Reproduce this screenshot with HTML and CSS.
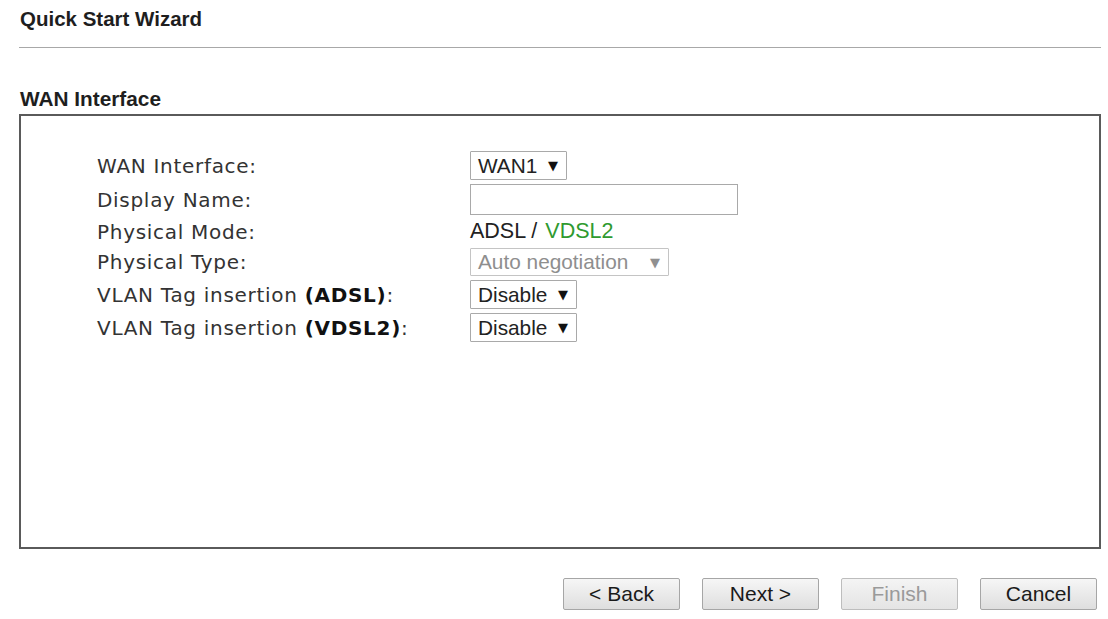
FILE: index.html
```html
<!DOCTYPE html>
<html>
<head>
<meta charset="utf-8">
<title>Quick Start Wizard</title>
<link rel="stylesheet" href="styles.css">
</head>
<body>
<div class="page">
  <h1 class="title">Quick Start Wizard</h1>
  <hr class="rule">
  <h2 class="section">WAN Interface</h2>
  <div class="panel">
    <div class="form">
      <div class="label">WAN Interface:</div>
      <div class="cell"><span class="sel sel-wan"><span class="val">WAN1</span><span class="arr">▼</span></span></div>

      <div class="label">Display Name:</div>
      <div class="cell"><input class="txt" type="text"></div>

      <div class="label">Physical Mode:</div>
      <div class="cell mode">ADSL /<span class="green">VDSL2</span></div>

      <div class="label">Physical Type:</div>
      <div class="cell"><span class="sel sel-type disabled"><span class="val">Auto negotiation</span><span class="arr">▼</span></span></div>

      <div class="label">VLAN Tag insertion <b>(ADSL)</b>:</div>
      <div class="cell"><span class="sel sel-dis"><span class="val">Disable</span><span class="arr">▼</span></span></div>

      <div class="label">VLAN Tag insertion <b>(VDSL2)</b>:</div>
      <div class="cell"><span class="sel sel-dis"><span class="val">Disable</span><span class="arr">▼</span></span></div>
    </div>
  </div>
  <div class="buttons">
    <button class="btn">&lt; Back</button>
    <button class="btn">Next &gt;</button>
    <button class="btn" disabled>Finish</button>
    <button class="btn">Cancel</button>
  </div>
</div>
</body>
</html>
```
FILE: styles.css
```css
html, body {
  margin: 0;
  padding: 0;
  background: #ffffff;
}
.page {
  width: 1108px;
  height: 619px;
  box-sizing: border-box;
  padding: 7px 7px 0 19px;
  font-family: "Liberation Sans", Arial, sans-serif;
  color: #222;
}
.title {
  margin: 0 0 0 1px;
  font-size: 20.5px;
  font-weight: bold;
  line-height: 24px;
  color: #1e1e1e;
}
.rule {
  margin: 16px 0 0 0;
  border: 0;
  height: 1px;
  background: #a8a8a8;
  width: 1082px;
}
.section {
  margin: 39px 0 0 1px;
  font-size: 20.8px;
  font-weight: bold;
  line-height: 24px;
  color: #1e1e1e;
}
.panel {
  margin-top: 3px;
  width: 1082px;
  height: 435px;
  box-sizing: border-box;
  border: 2px solid #5a5a5a;
  padding: 35px 0 0 76px;
}
.form {
  display: grid;
  grid-template-columns: 373px auto;
  row-gap: 4px;
  font-family: "DejaVu Sans", Verdana, sans-serif;
  font-size: 20px;
  color: #333;
}
.label {
  align-self: center;
  white-space: nowrap;
  letter-spacing: 0.7px;
}
.label b {
  color: #111;
}
.cell {
  display: flex;
  align-items: center;
}
.sel {
  box-sizing: border-box;
  display: inline-flex;
  align-items: center;
  justify-content: space-between;
  height: 29px;
  border: 1px solid #a9a9a9;
  border-radius: 1px;
  padding: 0 8px 0 7px;
  font-family: "Liberation Sans", Arial, sans-serif;
  font-size: 20.8px;
  color: #222;
  background: #fff;
}
.sel .arr {
  font-family: "DejaVu Sans", sans-serif;
  font-size: 13px;
  color: #111;
  margin-left: 8px;
}
.sel-wan { width: 97px; }
.sel-type { width: 199px; height: 28px; }
.sel-dis { width: 107px; }
.disabled, .disabled .arr {
  color: #8e8e8e;
}
.disabled { border-color: #c4c4c4; }
.disabled .arr { color: #909090; }
.txt {
  box-sizing: border-box;
  width: 268px;
  height: 31px;
  margin: 0;
  border: 1px solid #a9a9a9;
  padding: 0 4px;
  font-size: 18px;
}
.mode {
  height: 25px;
  font-family: "Liberation Sans", Arial, sans-serif;
  font-size: 21.5px;
  color: #222;
}
.green {
  color: #2f9a2f;
  margin-left: 8px;
}
.buttons {
  display: flex;
  justify-content: flex-end;
  gap: 22px;
  margin-top: 29px;
  width: 1078px;
}
.btn {
  box-sizing: border-box;
  width: 117px;
  height: 32px;
  border: 1px solid #a6a6a6;
  border-radius: 2px;
  background: linear-gradient(#f6f6f6, #dedede);
  font-family: "Liberation Sans", Arial, sans-serif;
  font-size: 21px;
  color: #1a1a1a;
  padding: 0;
}
.btn:disabled {
  color: #9a9a9a;
  border-color: #bdbdbd;
  background: linear-gradient(#f4f4f4, #e4e4e4);
}
```
